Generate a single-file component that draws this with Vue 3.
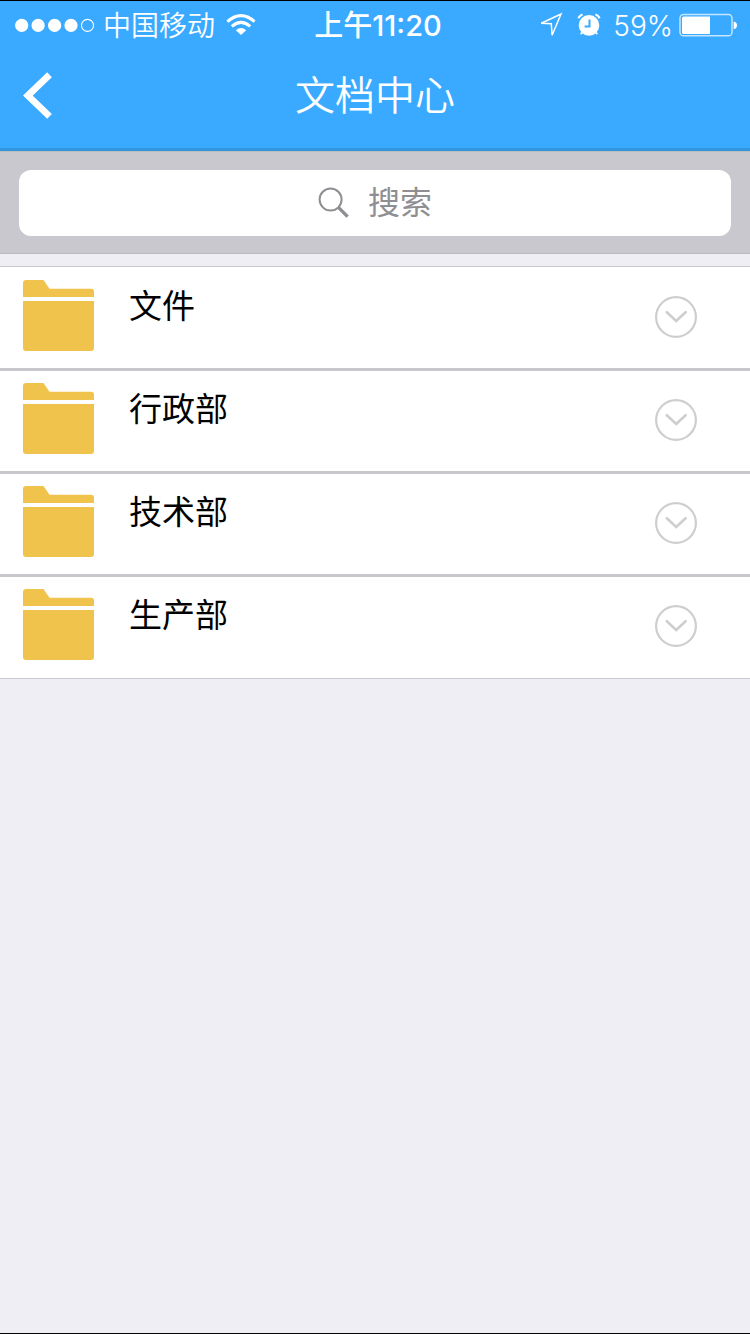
<script setup>
import { ref } from 'vue'

const query = ref('')
const folders = ['文件', '行政部', '技术部', '生产部']
</script>

<template>
  <div class="screen">
    <header class="top">
      <div class="status">
        <div class="side">
          <svg class="signal" width="80" height="16" viewBox="0 0 80 16" aria-hidden="true">
            <g fill="#fff">
              <circle cx="6.7" cy="8.4" r="6.6" />
              <circle cx="23.1" cy="8.4" r="6.6" />
              <circle cx="39.6" cy="8.4" r="6.6" />
              <circle cx="56" cy="8.4" r="6.6" />
            </g>
            <circle cx="72.5" cy="8.4" r="6" fill="none" stroke="#fff" stroke-width="1.1" />
          </svg>
          <span class="carrier">中国移动</span>
          <svg class="wifi" width="30" height="24" viewBox="0 0 30 24" aria-hidden="true">
            <g fill="none" stroke="#fff" stroke-width="3">
              <path d="M1.4 8.6Q15 -3.4 28.6 8.6" />
              <path d="M5.8 13.4Q15 5.4 24.2 13.4" />
            </g>
            <path d="M9.8 17.2Q15 13 20.2 17.2L15 22Z" fill="#fff" />
          </svg>
        </div>
        <time class="time">上午11:20</time>
        <div class="side end">
          <svg class="location" width="24" height="26" viewBox="0 0 24 26" aria-hidden="true">
            <path d="M2.2 11.3L22 2L13.1 23.2L12.3 11.8Z" fill="none" stroke="#fff" stroke-width="1.5" />
          </svg>
          <svg class="alarm" width="24" height="24" viewBox="0 0 24 24" aria-hidden="true">
            <circle cx="12" cy="12.4" r="10.3" fill="#fff" />
            <path d="M1.4 5.4Q2.4 2.4 5.6 1.5M22.6 5.4Q21.6 2.4 18.4 1.5" fill="none" stroke="#fff" stroke-width="2" />
            <path d="M5 19.6L3.8 21.2M19 19.6L20.2 21.2" stroke="#fff" stroke-width="2" />
            <path d="M12.5 6.6V13.4H7.6" fill="none" stroke="#39aaff" stroke-width="2" />
          </svg>
          <span class="percent">59%</span>
          <svg class="battery" width="58" height="24" viewBox="0 0 58 24" aria-hidden="true">
            <rect x="1" y="1.4" width="52" height="21.4" rx="3.6" fill="none" stroke="#fff" stroke-opacity=".7" stroke-width="1.5" />
            <path d="M4.6 3.6H31V21H4.6Q3 21 3 19.4V5.2Q3 3.6 4.6 3.6Z" fill="#fff" />
            <path d="M54.6 8.4Q58 8.8 58 12.3Q58 15.8 54.6 16.2Z" fill="#fff" />
          </svg>
        </div>
      </div>
      <div class="nav">
        <button class="back" type="button" aria-label="返回">
          <svg width="30" height="48" viewBox="0 0 30 48" aria-hidden="true">
            <path d="M26.5 2.8L4.9 23.6L26.5 44.4" fill="none" stroke="#fff" stroke-width="6.8" />
          </svg>
        </button>
        <h1>文档中心</h1>
      </div>
    </header>

    <form class="search" role="search" @submit.prevent>
      <div class="field">
        <svg class="glass" width="32" height="32" viewBox="0 0 32 32" aria-hidden="true">
          <circle cx="12.6" cy="12.6" r="11" fill="none" stroke="#8e8e93" stroke-width="2" />
          <path d="M20.4 20.4L29.6 29.6" stroke="#8e8e93" stroke-width="3.4" />
        </svg>
        <input v-model="query" type="text" placeholder="搜索" aria-label="搜索" />
      </div>
    </form>

    <ul class="list">
      <li v-for="name in folders" :key="name" class="row">
        <svg class="folder" width="72" height="72" viewBox="0 0 72 72" aria-hidden="true">
          <path d="M0 17V3Q0 0 3 0H20.5L26.5 8.8H68Q71 8.8 71 11.8V17Z" fill="#efc34c" />
          <path d="M0 21H71V68Q71 71 68 71H3Q0 71 0 68Z" fill="#efc34c" />
        </svg>
        <span class="name">{{ name }}</span>
        <button class="more" type="button" :aria-label="'展开 ' + name">
          <svg width="42" height="42" viewBox="0 0 42 42" aria-hidden="true">
            <g fill="none" stroke="#cecece">
              <circle cx="21" cy="21" r="19.9" stroke-width="2.2" />
              <path d="M11.8 16.2L21.2 25L30.6 16.2" stroke-width="2.6" stroke-linecap="round" />
            </g>
          </svg>
        </button>
      </li>
    </ul>
  </div>
</template>

<style>
body {
  margin: 0;
  background: #efeef4;
}
</style>

<style scoped>
.screen {
  box-sizing: border-box;
  min-height: 100vh;
  border-top: 1px solid #000;
  border-bottom: 1px solid #000;
  background: #efeef4;
  font-family: "Inter", "Noto Sans CJK SC", sans-serif;
  font-weight: 350;
}

.top {
  background: #39aaff;
  border-bottom: 3px solid #3295df;
  color: #fff;
}

.status {
  display: flex;
  align-items: center;
  height: 48px;
  padding: 0 13px 0 15px;
  font-size: 28px;
  line-height: 48px;
}

.side {
  display: flex;
  flex: 1;
  align-items: center;
}

.end {
  justify-content: flex-end;
}

.carrier,
.time,
.percent {
  padding-top: 2px;
}

.carrier {
  margin: 0 11px 0 8px;
}

.time {
  padding-left: 4px;
  font-size: 29px;
  font-weight: 500;
}

.location {
  margin-right: 14px;
}

.alarm {
  margin-right: 12px;
}

.percent {
  margin-right: 6px;
}

.nav {
  display: grid;
  grid-template-columns: 96px 1fr 96px;
  align-items: center;
  height: 99px;
}

button {
  display: flex;
  padding: 0;
  border: 0;
  background: none;
}

.back {
  padding: 0 24px 6px 23px;
}

h1 {
  margin: 0;
  padding-bottom: 6px;
  font-size: 40px;
  font-weight: 350;
  line-height: 56px;
  text-align: center;
}

.search {
  padding: 18px 19px 17px;
  border-top: 1px solid #bfbcbc;
  border-bottom: 1px solid #bcbbc0;
  background: #c9c8ce;
}

.field {
  position: relative;
}

.glass {
  position: absolute;
  top: 17px;
  left: calc(50% - 57px);
}

input {
  display: block;
  box-sizing: border-box;
  width: 100%;
  height: 66px;
  padding: 0 0 2px 50px;
  border: 0;
  border-radius: 12px;
  outline: 0;
  background: #fff;
  color: #000;
  font: inherit;
  font-size: 32px;
  font-weight: 400;
  text-align: center;
}

input::placeholder {
  color: #8e8e93;
  opacity: 1;
}

.list {
  margin: 12px 0 0;
  padding: 1px 0;
  border-top: 1px solid #c8c7cc;
  border-bottom: 1px solid #c8c7cc;
  background: #fff;
  list-style: none;
}

.row {
  display: flex;
  align-items: flex-start;
  min-height: 100px;
  padding: 0 53px 0 23px;
  border-bottom: 3px solid #c8c7cc;
}

.row:last-child {
  border-bottom: 0;
}

.folder {
  margin-top: 12px;
}

.name {
  flex: 1;
  margin: 14px 24px 0 34px;
  color: #000;
  font-size: 33px;
  font-weight: 400;
  line-height: 48px;
}

.more {
  margin-top: 28px;
}
</style>
